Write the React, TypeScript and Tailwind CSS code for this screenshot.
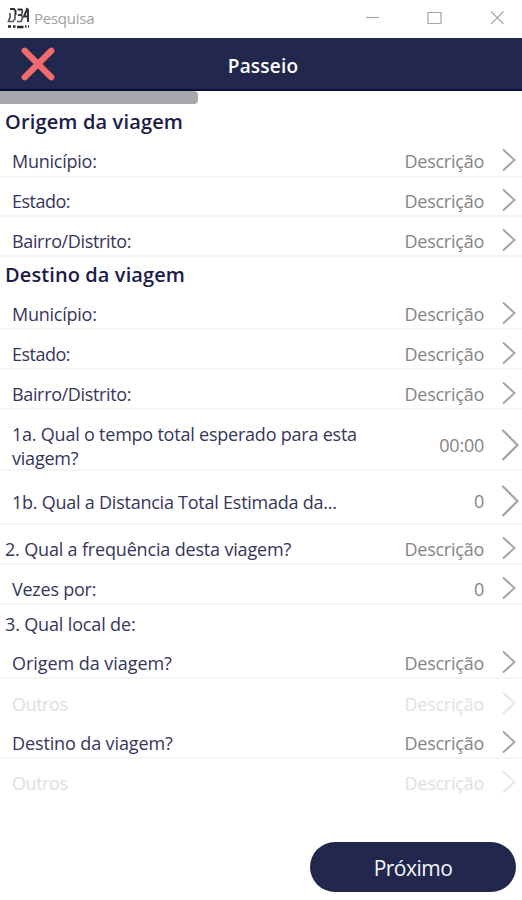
import React from "react";

function Chevron({ large = false }: { large?: boolean }) {
  return large ? (
    <svg className="h-[32px] w-[18px]" viewBox="0 0 18 32" fill="none" stroke="#a3a3a3" strokeWidth="2.2">
      <path d="M1.5 1L16.5 16L1.5 31" />
    </svg>
  ) : (
    <svg className="mr-[3px] h-[24px] w-[14px]" viewBox="0 0 14 24" fill="none" stroke="#a3a3a3" strokeWidth="1.9">
      <path d="M1 1.5L12.5 12L1 22.5" />
    </svg>
  );
}

type RowProps = {
  label: React.ReactNode;
  value?: string;
  size: string;
  labelClass?: string;
  large?: boolean;
  line?: boolean;
  disabled?: boolean;
};

function Row({ label, value = "Descrição", size, labelClass = "pl-3", large, line = true, disabled }: RowProps) {
  return (
    <div
      className={`flex justify-between pr-[3px] ${large ? "items-center" : "items-end"} ${size} ${
        line ? "border-b-2 border-[#f5f5f6]" : ""
      }`}
    >
      <div className={`whitespace-nowrap leading-6 ${labelClass} ${disabled ? "text-[#dedee2]" : "text-[#35365a]"}`}>{label}</div>
      <div className={`flex items-center ${disabled ? "opacity-25" : ""}`}>
        <span className={`leading-6 text-[#858585] ${large ? "-mt-[2px] mr-[17px]" : "mr-[18px]"}`}>{value}</span>
        <div className="relative -top-px">
          <Chevron large={large} />
        </div>
      </div>
    </div>
  );
}

function Logo() {
  return (
    <svg className="h-[23px] w-[23px]" viewBox="0 0 23 23" fill="none">
      <path d="M3 2H7L8.5 4V8M10.5 2.5H14.5L15.5 4M20.5 1L17 9.5H21.5" stroke="#2b2e37" strokeWidth="2" />
      <path d="M3 6V10L1.5 14.5H6L8 12V8M15.5 4L14.5 8L15.5 11L14 14.5H10" stroke="#555965" strokeWidth="1.7" />
      <path d="M11 8H15M21 2V15" stroke="#353944" strokeWidth="2" />
      <path d="M1 19.5H4M6 19.5H8.5M10 20H16.5M18 19.5H19.5M21 19.5H22" stroke="#26282f" strokeWidth="2.4" />
    </svg>
  );
}

export default function App() {
  return (
    <div className="flex h-[900px] w-[522px] flex-col overflow-hidden bg-white font-['Open_Sans','Noto_Sans',sans-serif] text-[18px] tracking-[-0.24px]">
      <div className="flex h-[38px] shrink-0 items-center justify-between pl-[7px] pr-[18px]">
        <div className="flex items-center">
          <div className="mt-[-2px]">
            <Logo />
          </div>
          <span className="ml-[4px] mt-[-3px] text-[15px] leading-5 text-[#a0a0a0]">Pesquisa</span>
        </div>
        <svg className="mt-[-3px] h-[14px] w-[139px]" viewBox="0 0 139 14" fill="none" stroke="#a5a5a5">
          <path d="M1 6.5H14" strokeWidth="1.2" />
          <path d="M63 1.5H76V12.5H63Z" strokeWidth="1.2" />
          <path d="M126 0.5L138.5 13M138.5 0.5L126 13" strokeWidth="1.1" />
        </svg>
      </div>

      <header className="grid h-[53px] shrink-0 grid-cols-[1fr_auto_1fr] items-center border-b-2 border-[#0b0d3c] bg-[#22284d]">
        <svg className="ml-[21px] h-[34px] w-[34px]" viewBox="0 0 34 34" stroke="#f06b6b" strokeWidth="6.2" strokeLinecap="round">
          <path d="M3.7 3.7L30.3 30.3M30.3 3.7L3.7 30.3" />
        </svg>
        <h1 className="pl-[4px] pt-[5px] text-[19px] font-semibold tracking-[0.2px] text-white">Passeio</h1>
        <span />
      </header>

      <div className="h-[13px] w-[198px] shrink-0 rounded-r-[4px] bg-[#a7a8ac]" />

      <main className="flex shrink-0 flex-col">
        <h2 className="h-[34px] pl-[5px] pt-[4px] text-[20px] font-semibold leading-7 tracking-[0.15px] text-[#1b1c47]">Origem da viagem</h2>
        <Row label="Município:" size="h-[40px] pb-[3px]" />
        <Row label="Estado:" size="h-[39px] pb-[2px]" labelClass="pl-3 tracking-[-0.5px]" />
        <Row label="Bairro/Distrito:" size="h-[40px] pb-[2px]" labelClass="pl-3 tracking-[-0.35px]" />
        <h2 className="h-[33px] pl-[5px] pt-[4px] text-[20px] font-semibold leading-7 tracking-[0.1px] text-[#1b1c47]">Destino da viagem</h2>
        <Row label="Município:" size="h-[40px] pb-[2px]" />
        <Row label="Estado:" size="h-[40px] pb-[2px]" labelClass="pl-3 tracking-[-0.5px]" />
        <Row label="Bairro/Distrito:" size="h-[40px] pb-[2px]" labelClass="pl-3 tracking-[-0.35px]" />
        <Row
          label={<>1a. Qual o tempo total esperado para esta<br />viagem?</>}
          value="00:00"
          size="h-[61px] pt-[13px]"
          labelClass="pl-3 -mt-[1px] tracking-[-0.22px]"
          large
        />
        <Row label="1b. Qual a Distancia Total Estimada da..." value="0" size="h-[54px] pt-[9px]" large />
        <Row label="2. Qual a frequência desta viagem?" size="h-[40px] pb-[2px]" labelClass="pl-[5px] tracking-[-0.17px]" />
        <Row label="Vezes por:" value="0" size="h-[40px] pb-[2px]" />
        <div className="h-[34px] pl-[5px] pt-[7px] leading-6 tracking-[-0.15px] text-[#35365a]">3. Qual local de:</div>
        <Row label="Origem da viagem?" size="h-[40px] pb-[2px]" labelClass="pl-3 tracking-[-0.05px]" />
        <Row label="Outros" size="h-[40px] pb-[3px]" labelClass="pl-3 tracking-[-0.45px]" line={false} disabled />
        <Row label="Destino da viagem?" size="h-[40px] pb-[2px]" labelClass="pl-3 tracking-[-0.12px]" />
        <Row label="Outros" size="h-[40px] pb-[4px]" labelClass="pl-3 tracking-[-0.45px]" line={false} disabled />
      </main>

      <button className="ml-[310px] mt-[43px] flex h-[50px] w-[206px] shrink-0 items-center justify-center rounded-full bg-[#22284d] pt-[3px] text-[21px] tracking-[-0.5px] text-[#f4f5fa]">
        Próximo
      </button>
    </div>
  );
}
